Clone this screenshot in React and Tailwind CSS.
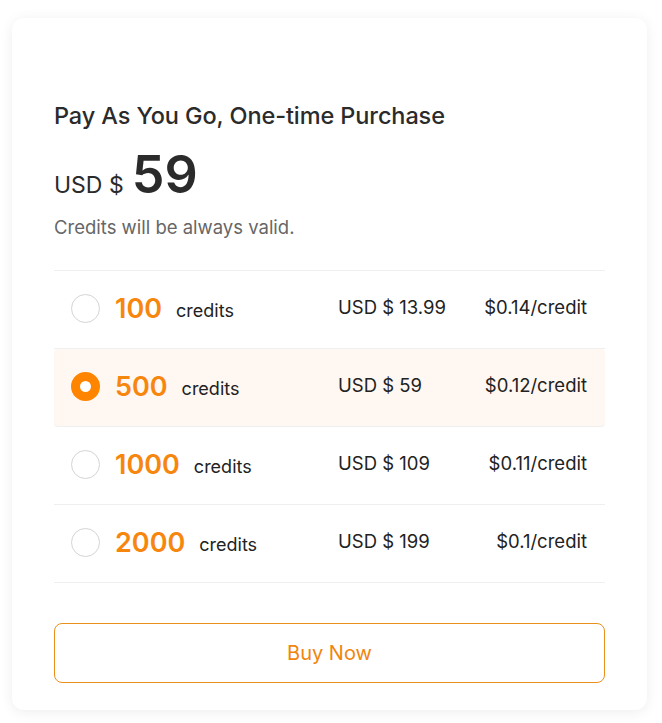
import React, { useState } from "react";

const plans = [
  { credits: 100, price: "USD $ 13.99", per: "$0.14/credit" },
  { credits: 500, price: "USD $ 59", per: "$0.12/credit" },
  { credits: 1000, price: "USD $ 109", per: "$0.11/credit" },
  { credits: 2000, price: "USD $ 199", per: "$0.1/credit" },
];

export default function App() {
  const [selected, setSelected] = useState(1);
  return (
    <div
      className="min-h-[723px] w-[662px] bg-white pt-[18px] pl-[12px]"
      style={{ fontFamily: "Inter, 'Noto Sans', sans-serif" }}
    >
      <div className="w-[635px] h-[692px] rounded-[12px] bg-white shadow-[0_2px_14px_rgba(0,0,0,0.07)] px-[42px] pt-[83px] flex flex-col">
        <h1 className="text-[23.5px] leading-[30px] font-medium text-[#2b2b2b] tracking-[-0.1px]">
          Pay As You Go, One-time Purchase
        </h1>
        <div className="flex items-baseline mt-[21px] text-[#2b2b2b]">
          <span className="text-[23px] leading-none">USD $</span>
          <span className="text-[52px] leading-[46px] font-semibold ml-[8px]">59</span>
        </div>
        <p className="mt-[17px] text-[18.5px] leading-[24px] text-[#666666]">
          Credits will be always valid.
        </p>
        <div className="mt-[31px] border-t border-[#efefef]">
          {plans.map((p, i) => {
            const active = i === selected;
            return (
              <div
                key={p.credits}
                onClick={() => setSelected(i)}
                className={`h-[78px] flex items-center pl-[17px] pr-[18px] pb-[3px] border-b border-[#efefef] cursor-pointer ${
                  active ? "bg-[#fff7f1] rounded-[4px]" : ""
                }`}
              >
                <div className="flex-1 flex items-center">
                  <span
                    className={`w-[29px] h-[29px] rounded-full box-border shrink-0 ${
                      active ? "border-[9px] border-[#ff8500] bg-white" : "border border-[#d4d4d4] bg-white"
                    }`}
                  />
                  <span className="ml-[15px] text-[27px] font-semibold text-[#f7860f] leading-none">
                    {p.credits}
                  </span>
                  <span className="ml-[14px] mt-[6px] text-[18px] text-[#222222] leading-none">
                    credits
                  </span>
                </div>
                <div className="w-[145px] text-[18.5px] text-[#222222]">{p.price}</div>
                <div className="w-[104px] text-right text-[18.5px] text-[#222222] whitespace-nowrap">{p.per}</div>
              </div>
            );
          })}
        </div>
        <button className="mt-[40px] h-[60px] w-full rounded-[8px] border border-[#e8901a] text-[20px] text-[#f0850f] bg-white">
          Buy Now
        </button>
      </div>
    </div>
  );
}
